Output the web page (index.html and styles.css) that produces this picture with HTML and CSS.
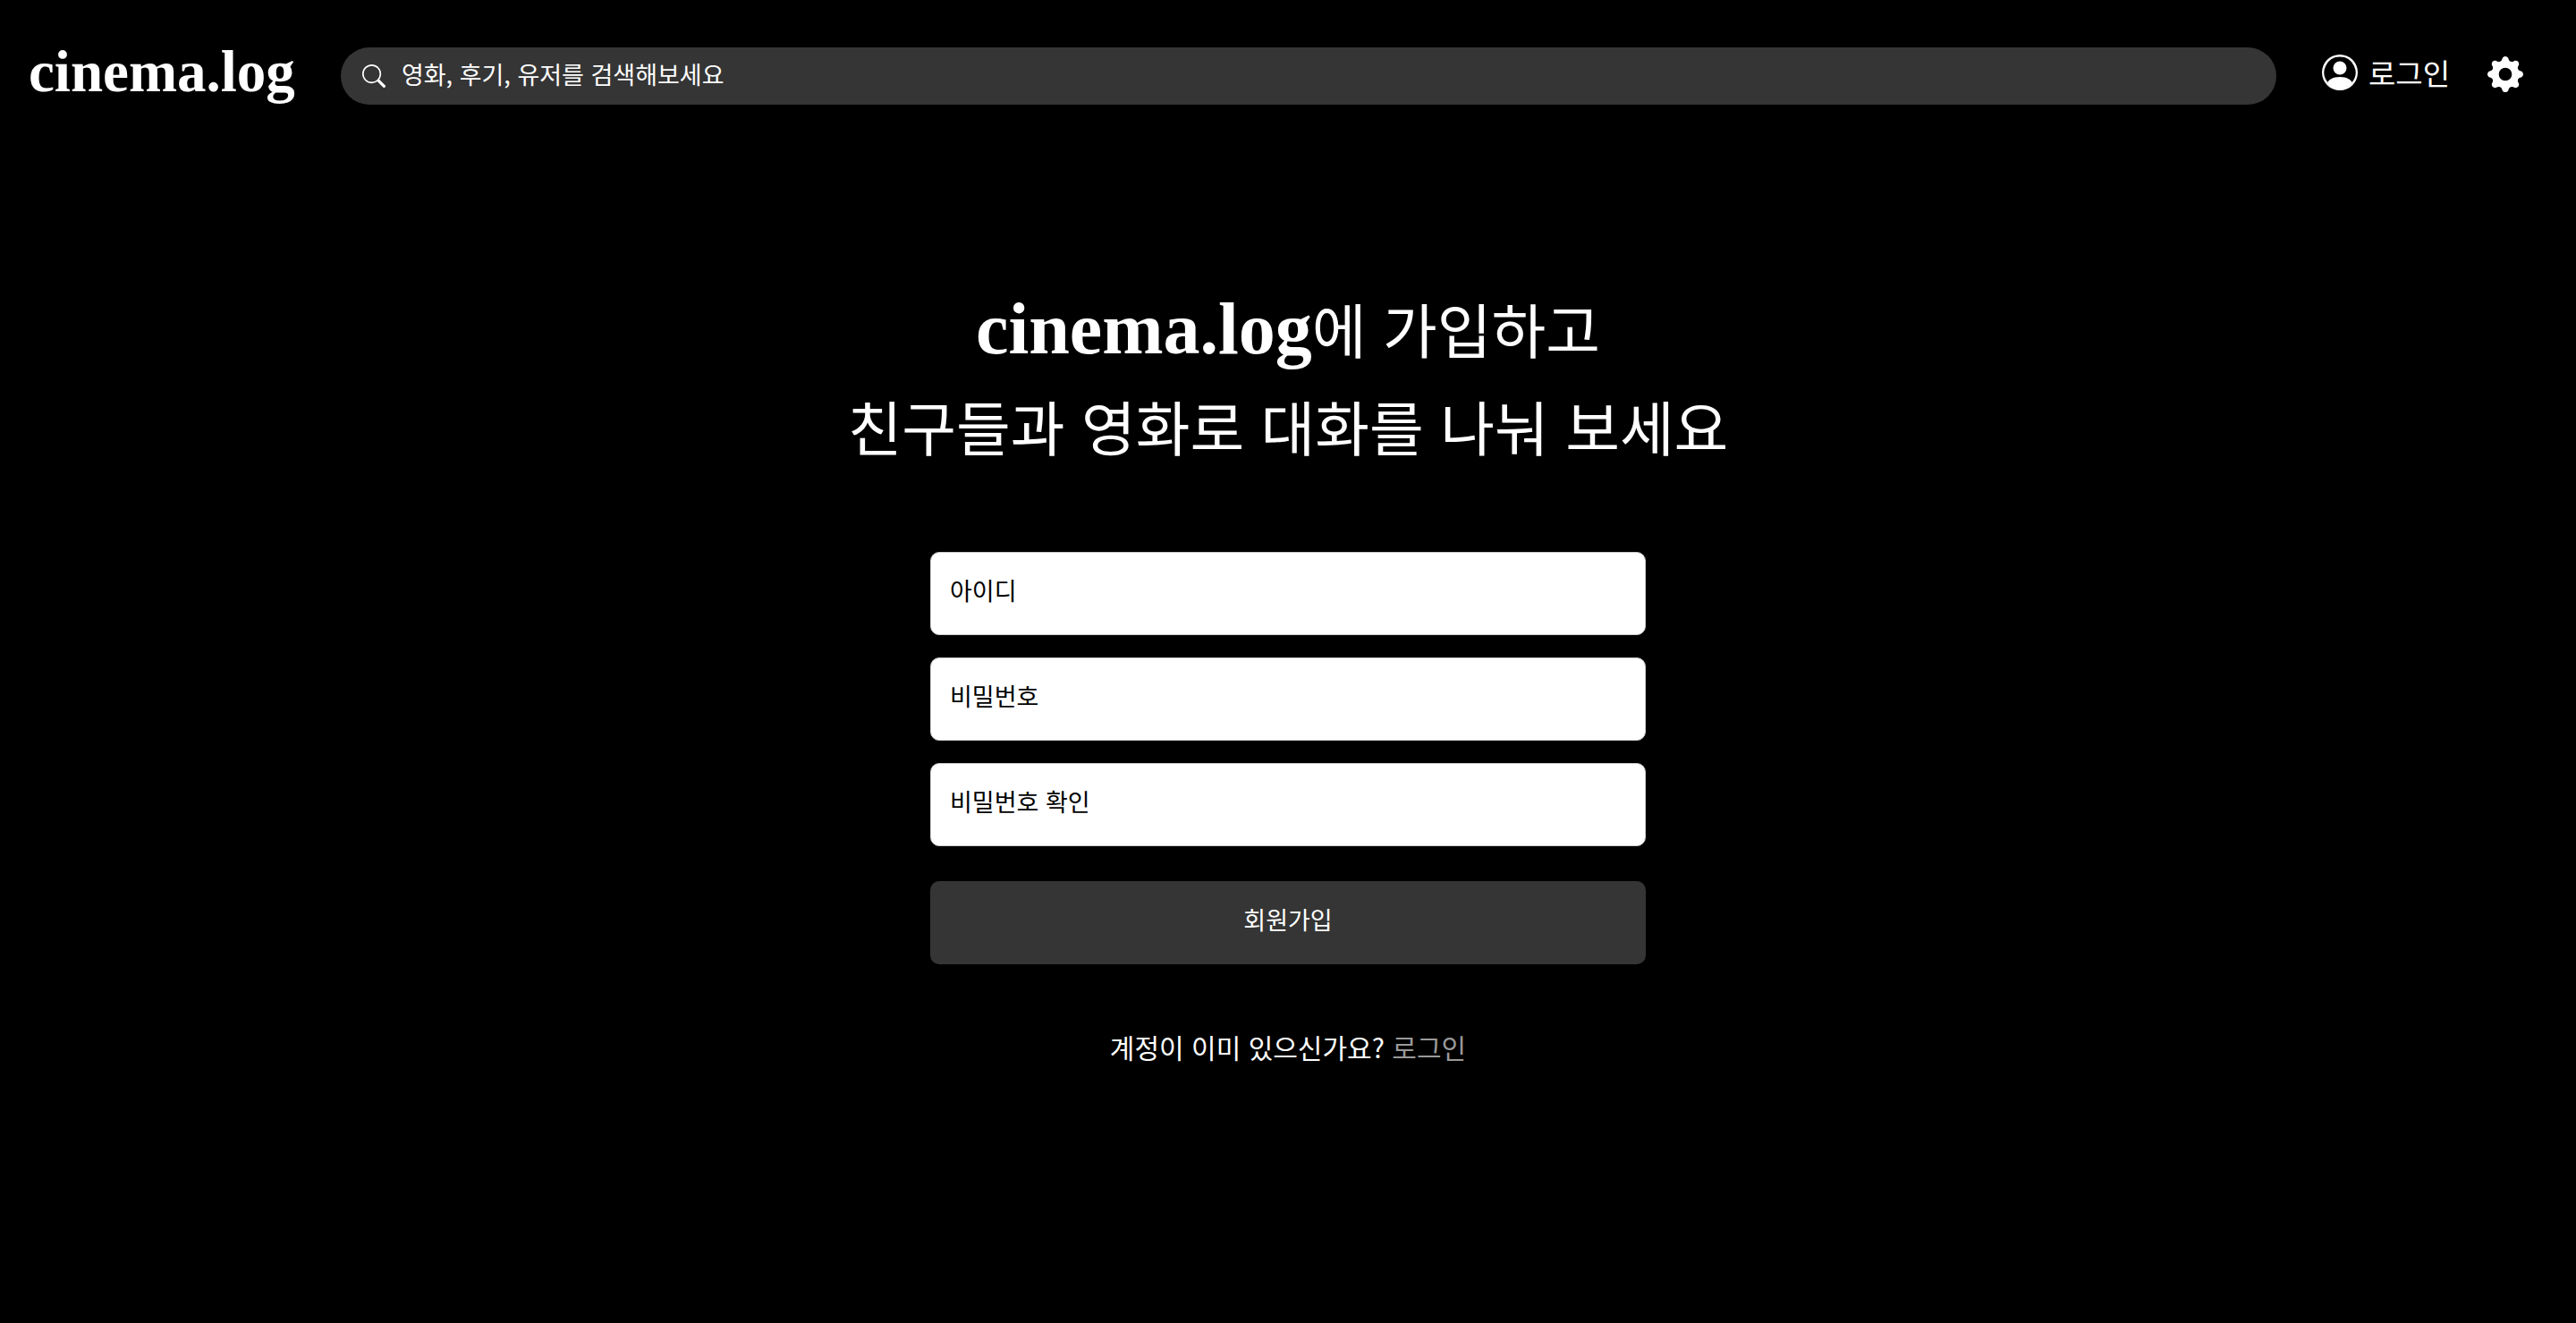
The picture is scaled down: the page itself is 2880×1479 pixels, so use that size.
FILE: index.html
```html
<!DOCTYPE html>
<html lang="ko">
<head>
<meta charset="utf-8">
<meta name="viewport" content="width=device-width, initial-scale=1">
<title>cinema.log</title>
<link rel="stylesheet" href="styles.css">
</head>
<body>
<header class="header">
  <a class="logo" href="#">cinema.log</a>
  <form class="search" role="search">
    <svg class="search-icon" viewBox="0 0 16 16" fill="currentColor" aria-hidden="true"><path d="M11.742 10.344a6.500 6.500 0 1 0-1.397 1.398h-.001c.03.04.062.078.098.115l3.850 3.850a1 1 0 0 0 1.415-1.414l-3.850-3.850a1.007 1.007 0 0 0-.115-.1zM12 6.500a5.500 5.500 0 1 1-11 0 5.500 5.500 0 0 1 11 0z"/></svg>
    <input class="search-input" type="search" aria-label="검색" placeholder="영화, 후기, 유저를 검색해보세요">
  </form>
  <nav class="nav">
    <a class="login" href="#">
      <svg class="icon" viewBox="0 0 16 16" fill="currentColor" aria-hidden="true"><path d="M11 6a3 3 0 1 1-6 0 3 3 0 0 1 6 0z"/><path fill-rule="evenodd" d="M0 8a8 8 0 1 1 16 0A8 8 0 0 1 0 8zm8-7a7 7 0 0 0-5.468 11.370C3.242 11.226 4.805 10 8 10s4.757 1.225 5.468 2.370A7 7 0 0 0 8 1z"/></svg>
      <span>로그인</span>
    </a>
    <button class="settings" type="button" aria-label="설정">
      <svg class="icon" viewBox="0 0 16 16" fill="currentColor" aria-hidden="true"><path d="M9.405 1.050c-.413-1.400-2.397-1.400-2.810 0l-.1.340a1.464 1.464 0 0 1-2.105.872l-.31-.17c-1.283-.698-2.686.705-1.987 1.987l.169.311c.446.82.023 1.841-.872 2.105l-.34.1c-1.400.413-1.400 2.397 0 2.810l.34.1a1.464 1.464 0 0 1 .872 2.105l-.17.31c-.698 1.283.705 2.686 1.987 1.987l.311-.169a1.464 1.464 0 0 1 2.105.872l.1.34c.413 1.400 2.397 1.400 2.810 0l.1-.34a1.464 1.464 0 0 1 2.105-.872l.31.17c1.283.698 2.686-.705 1.987-1.987l-.169-.311a1.464 1.464 0 0 1 .872-2.105l.34-.1c1.400-.413 1.400-2.397 0-2.810l-.34-.1a1.464 1.464 0 0 1-.872-2.105l.17-.31c.698-1.283-.705-2.686-1.987-1.987l-.311.169a1.464 1.464 0 0 1-2.105-.872l-.1-.34zM8 10.930a2.929 2.929 0 1 1 0-5.860 2.929 2.929 0 0 1 0 5.858z"/></svg>
    </button>
  </nav>
</header>
<main class="main">
  <h1 class="title"><strong class="brand">cinema.log</strong>에 가입하고<br>친구들과 영화로 대화를 나눠 보세요</h1>
  <form class="form">
    <input class="field" type="text" aria-label="아이디" placeholder="아이디">
    <input class="field" type="password" aria-label="비밀번호" placeholder="비밀번호">
    <input class="field" type="password" aria-label="비밀번호 확인" placeholder="비밀번호 확인">
    <button class="submit" type="button">회원가입</button>
  </form>
  <p class="hint">계정이 이미 있으신가요? <a class="hint-link" href="#">로그인</a></p>
</main>
</body>
</html>
```
FILE: styles.css
```css
* {
  box-sizing: border-box;
}

body {
  margin: 0;
  min-height: 100vh;
  background: #000;
  color: #fff;
  font-family: "Noto Sans CJK KR", sans-serif;
  font-size: 27px;
}

a {
  color: inherit;
  text-decoration: none;
}

input,
button {
  font: inherit;
}

.header {
  display: flex;
  align-items: center;
  padding: 45px 59px 45px 32px;
}

.logo,
.brand {
  font-family: "Liberation Serif", serif;
  font-weight: 700;
}

.logo {
  margin-right: 51px;
  padding-bottom: 10px;
  font-size: 65px;
  line-height: 70px;
}

.search {
  display: flex;
  flex: 1;
  align-items: center;
  gap: 18px;
  height: 64px;
  padding: 0 24px;
  border-radius: 32px;
  background: #353535;
}

.search-icon {
  width: 26px;
  height: 26px;
}

.search-input {
  flex: 1;
  min-width: 0;
  padding: 0 0 6px;
  border: 0;
  outline: 0;
  background: transparent;
  color: #fff;
}

.search-input::placeholder {
  color: #fff;
  opacity: 1;
}

.nav {
  display: flex;
  align-items: center;
  gap: 42px;
  margin-left: 51px;
  padding-bottom: 4px;
}

.login {
  display: flex;
  align-items: center;
  gap: 12px;
  padding-bottom: 4px;
  font-size: 33px;
  line-height: 48px;
}

.icon {
  display: block;
  width: 40px;
  height: 40px;
}

.settings {
  padding: 0;
  border: 0;
  background: transparent;
  color: #fff;
}

.main {
  display: flex;
  flex-direction: column;
  align-items: center;
  padding: 142px 32px 64px;
}

.title {
  margin: 0;
  font-size: 66px;
  font-weight: 400;
  line-height: 109px;
  text-align: center;
}

.brand {
  font-size: 82px;
  line-height: 80px;
}

.form {
  display: flex;
  flex-direction: column;
  gap: 25px;
  width: 100%;
  max-width: 800px;
  margin-top: 87px;
}

.field,
.submit {
  width: 100%;
  height: 93px;
  border-radius: 10px;
}

.field {
  padding: 0 21px 9px;
  border: 1px solid #ccc;
  outline: 0;
  background: #fff;
  color: #000;
}

.field::placeholder {
  color: #000;
  opacity: 1;
}

.submit {
  margin-top: 14px;
  padding: 0 0 9px;
  border: 0;
  background: #353535;
  color: #fff;
}

.hint {
  margin: 68px 0 0;
  font-size: 30px;
  line-height: 48px;
}

.hint-link {
  color: #999;
}
```
